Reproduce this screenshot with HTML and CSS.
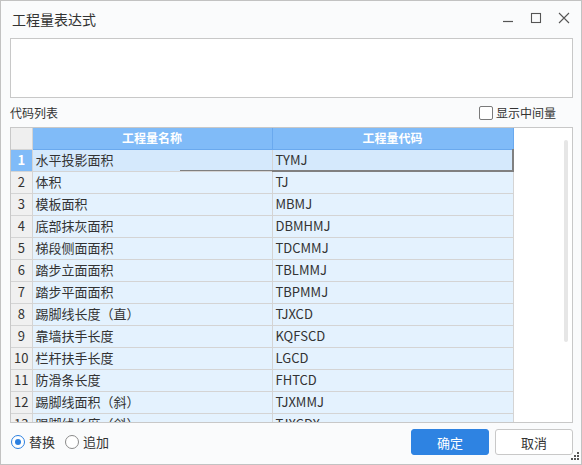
FILE: index.html
```html
<!DOCTYPE html>
<html lang="zh">
<head>
<meta charset="utf-8">
<title>工程量表达式</title>
<link rel="stylesheet" href="styles.css">
</head>
<body>
<div class="window">
  <div class="titlebar">
    <span class="title">工程量表达式</span>
    <div class="controls">
      <svg class="ctl" width="12" height="12" viewBox="0 0 12 12"><path d="M1 9.5H11" stroke="#555" stroke-width="1.2" fill="none"/></svg>
      <svg class="ctl" width="12" height="12" viewBox="0 0 12 12"><rect x="1.5" y="1.5" width="9" height="9" stroke="#555" stroke-width="1.1" fill="none"/></svg>
      <svg class="ctl" width="12" height="12" viewBox="0 0 12 12"><path d="M1 1L11 11M11 1L1 11" stroke="#555" stroke-width="1.1" fill="none"/></svg>
    </div>
  </div>
  <div class="expr"></div>
  <div class="labelrow">
    <span class="label">代码列表</span>
    <label class="check"><span class="box"></span>显示中间量</label>
  </div>
  <div class="grid">
    <table class="tbl">
      <colgroup><col class="c0"><col class="c1"><col class="c2"></colgroup>
      <thead>
        <tr><th class="corner"></th><th>工程量名称</th><th>工程量代码</th></tr>
      </thead>
      <tbody>
        <tr class="sel"><td class="rh">1</td><td class="name">水平投影面积</td><td class="code">TYMJ</td></tr>
        <tr><td class="rh">2</td><td>体积</td><td>TJ</td></tr>
        <tr><td class="rh">3</td><td>模板面积</td><td>MBMJ</td></tr>
        <tr><td class="rh">4</td><td>底部抹灰面积</td><td>DBMHMJ</td></tr>
        <tr><td class="rh">5</td><td>梯段侧面面积</td><td>TDCMMJ</td></tr>
        <tr><td class="rh">6</td><td>踏步立面面积</td><td>TBLMMJ</td></tr>
        <tr><td class="rh">7</td><td>踏步平面面积</td><td>TBPMMJ</td></tr>
        <tr><td class="rh">8</td><td>踢脚线长度（直）</td><td>TJXCD</td></tr>
        <tr><td class="rh">9</td><td>靠墙扶手长度</td><td>KQFSCD</td></tr>
        <tr><td class="rh">10</td><td>栏杆扶手长度</td><td>LGCD</td></tr>
        <tr><td class="rh">11</td><td>防滑条长度</td><td>FHTCD</td></tr>
        <tr><td class="rh">12</td><td>踢脚线面积（斜）</td><td>TJXMMJ</td></tr>
        <tr><td class="rh">13</td><td>踢脚线长度（斜）</td><td>TJXCDX</td></tr>
      </tbody>
    </table>
    <div class="scroll"><div class="thumb"></div></div>
  </div>
  <div class="footer">
    <div class="radios">
      <label class="radio"><span class="dot on"></span>替换</label>
      <label class="radio"><span class="dot"></span>追加</label>
    </div>
    <div class="buttons">
      <button class="btn primary">确定</button>
      <button class="btn">取消</button>
    </div>
  </div>
  <div class="grip">
    <svg width="8" height="8" viewBox="0 0 8 8" fill="#555">
      <rect x="6" y="0" width="2" height="2"/>
      <rect x="3" y="3" width="2" height="2"/><rect x="6" y="3" width="2" height="2"/>
      <rect x="0" y="6" width="2" height="2"/><rect x="3" y="6" width="2" height="2"/><rect x="6" y="6" width="2" height="2"/>
    </svg>
  </div>
</div>
</body>
</html>
```
FILE: styles.css
```css
* { box-sizing: border-box; }
html, body { margin: 0; padding: 0; }
body {
  font-family: "Noto Sans CJK SC", "Noto Sans", sans-serif;
  color: #333;
  background: #fff;
}
.window {
  position: relative;
  width: 582px;
  height: 465px;
  border: 1px solid #c2c2c2;
  background: #fafbfc;
  display: flex;
  flex-direction: column;
  padding: 0 8px 0 9px;
}
.titlebar {
  height: 37px;
  display: flex;
  align-items: center;
  justify-content: space-between;
}
.title {
  font-size: 14px;
  padding-left: 2px;
  color: #333;
  line-height: 20px;
  margin-top: -2px;
}
.controls {
  display: flex;
  gap: 16px;
  padding-right: 3px;
  margin-top: -3px;
}
.ctl { display: block; }
.expr {
  height: 60px;
  background: #fff;
  border: 1px solid #c8c8c8;
}
.labelrow {
  height: 29px;
  display: flex;
  align-items: center;
  justify-content: space-between;
}
.label { font-size: 12px; line-height: 16px; margin-top: 1px; }
.check {
  display: flex;
  align-items: center;
  font-size: 12px;
  line-height: 16px;
  padding-right: 17px;
  margin-top: 1px;
}
.box {
  width: 14px;
  height: 14px;
  border: 1px solid #7a7a7a;
  border-radius: 2px;
  background: #fff;
  margin-right: 3px;
}
.grid {
  position: relative;
  height: 296px;
  border: 1px solid #c8c8c8;
  background: #fff;
  overflow: hidden;
}
.tbl {
  border-collapse: collapse;
  table-layout: fixed;
  width: 502px;
  font-size: 13px;
}
.c0 { width: 21px; }
.c1 { width: 240px; }
.c2 { width: 241px; }
.tbl th {
  height: 21px;
  padding: 0;
  background: #80bbf8;
  color: #fff;
  font-weight: bold;
  font-size: 12px;
  border: 1px solid #6aa9ee;
  border-top: none;
  line-height: 18px;
}
.tbl th.corner {
  background: #efefef;
  border-color: #d4d4d4;
  border-left: none;
}
.tbl td {
  height: 22px;
  padding: 0 0 0 3px;
  background: #e4f2fe;
  border: 1px solid #d4d4d4;
  line-height: 20px;
  white-space: nowrap;
  overflow: hidden;
}
.tbl td.rh {
  background: #f0f0f0;
  text-align: center;
  padding: 0;
  border-left: none;
}
.tbl tr.sel td { background: #d5e9fc; }
.tbl tr.sel td.rh { background: #80bbf8; color: #fff; font-weight: bold; }
.tbl tr.sel td.code {
  border-bottom: 2px solid #808080;
  border-right: 2px solid #808080;
}
.tbl tr.sel td.name { position: relative; }
.tbl tr.sel td.name::after {
  content: "";
  position: absolute;
  right: 0;
  bottom: -1px;
  width: 92px;
  height: 2px;
  background: #808080;
}
.scroll {
  position: absolute;
  top: 12px;
  right: 4px;
  width: 4px;
  height: 202px;
}
.thumb {
  width: 100%;
  height: 100%;
  background: #e6e6e6;
  border-radius: 2px;
}
.footer {
  flex: 1;
  display: flex;
  align-items: center;
  justify-content: space-between;
  padding-top: 6px;
  padding-bottom: 9px;
}
.radios { display: flex; gap: 10px; padding-left: 1px; }
.radio {
  display: flex;
  align-items: center;
  font-size: 13px;
  line-height: 18px;
}
.dot {
  width: 14px;
  height: 14px;
  border-radius: 50%;
  border: 1px solid #8a8a8a;
  background: #fff;
  margin-right: 4px;
  position: relative;
}
.dot.on { border-color: #2b7fe0; }
.dot.on::after {
  content: "";
  position: absolute;
  left: 3px;
  top: 3px;
  width: 6px;
  height: 6px;
  border-radius: 50%;
  background: #2b7fe0;
}
.buttons { display: flex; gap: 6px; }
.btn {
  width: 78px;
  height: 26px;
  border: 1px solid #c8c8c8;
  border-radius: 3px;
  background: #fff;
  font-family: "Noto Sans CJK SC", "Noto Sans", sans-serif;
  font-size: 13px;
  color: #333;
  padding: 0;
}
.btn.primary {
  background: #2e83e2;
  border-color: #2e83e2;
  color: #fff;
}
.grip {
  position: absolute;
  right: 2px;
  bottom: 4px;
  line-height: 0;
}
```
